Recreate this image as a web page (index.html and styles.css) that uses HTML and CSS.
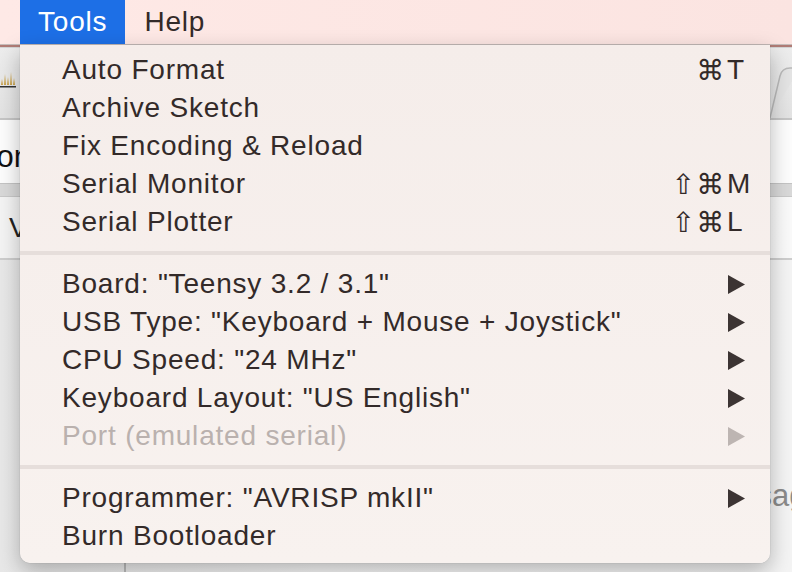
FILE: index.html
```html
<!DOCTYPE html>
<html>
<head>
<meta charset="utf-8">
<link rel="stylesheet" href="styles.css">
</head>
<body>
<div class="screen">
  <header class="menubar">
    <span class="mb-item active">Tools</span>
    <span class="mb-item">Help</span>
  </header>

  <div class="window">
    <div class="win-edge"></div>
    <div class="toolbar">
      <svg class="plot-icon" width="16" height="18" viewBox="0 0 16 18">
        <path d="M1 15 L2 9 L3 15 Z M4 15 L5 4 L6 15 Z M7 15 L8 7 L9 15 Z M10 15 L11 2 L12 15 Z M13 15 L14 8 L15 15 Z" fill="#c9a24a"/>
        <rect x="0" y="16" width="16" height="1.5" fill="#333"/>
      </svg>
      <svg class="tab-shape" width="30" height="52" viewBox="0 0 30 52">
        <path d="M0 52 L10 10 Q12 2 20 2 L30 2" fill="#e4e4e4" stroke="#b9b9b9" stroke-width="1.5"/>
      </svg>
    </div>
    <div class="tb-line"></div>
    <div class="editor-head"><span class="clip-text">com</span></div>
    <div class="grey-band"></div>
    <div class="light-band"><span class="v-text">V</span></div>
    <div class="band-line"></div>
    <div class="lower">
      <div class="lower-text">Usage</div>
      <div class="lower-foot"><span class="vline"></span></div>
    </div>
  </div>

  <div class="menu">
    <div class="item"><span class="label">Auto Format</span><span class="shortcut"><span class="mods">⌘</span><span class="key">T</span></span></div>
    <div class="item"><span class="label">Archive Sketch</span></div>
    <div class="item"><span class="label">Fix Encoding &amp; Reload</span></div>
    <div class="item"><span class="label">Serial Monitor</span><span class="shortcut"><span class="mods">⇧⌘</span><span class="key">M</span></span></div>
    <div class="item"><span class="label">Serial Plotter</span><span class="shortcut"><span class="mods">⇧⌘</span><span class="key">L</span></span></div>
    <div class="sep"></div>
    <div class="item"><span class="label">Board: "Teensy 3.2 / 3.1"</span><svg class="arrow" width="17" height="19" viewBox="0 0 17 19"><polygon points="0,0 17,9.5 0,19"/></svg></div>
    <div class="item"><span class="label">USB Type: "Keyboard + Mouse + Joystick"</span><svg class="arrow" width="17" height="19" viewBox="0 0 17 19"><polygon points="0,0 17,9.5 0,19"/></svg></div>
    <div class="item"><span class="label">CPU Speed: "24 MHz"</span><svg class="arrow" width="17" height="19" viewBox="0 0 17 19"><polygon points="0,0 17,9.5 0,19"/></svg></div>
    <div class="item"><span class="label">Keyboard Layout: "US English"</span><svg class="arrow" width="17" height="19" viewBox="0 0 17 19"><polygon points="0,0 17,9.5 0,19"/></svg></div>
    <div class="item disabled"><span class="label">Port (emulated serial)</span><svg class="arrow" width="17" height="19" viewBox="0 0 17 19"><polygon points="0,0 17,9.5 0,19"/></svg></div>
    <div class="sep"></div>
    <div class="item"><span class="label">Programmer: "AVRISP mkII"</span><svg class="arrow" width="17" height="19" viewBox="0 0 17 19"><polygon points="0,0 17,9.5 0,19"/></svg></div>
    <div class="item"><span class="label">Burn Bootloader</span></div>
  </div>
</div>
</body>
</html>
```

FILE: styles.css
```css
* { box-sizing: border-box; }
html, body { margin: 0; padding: 0; }
body {
  width: 792px;
  height: 572px;
  overflow: hidden;
  font-family: "Liberation Sans", Arial, "DejaVu Sans", sans-serif;
}
.screen {
  position: relative;
  width: 792px;
  height: 572px;
  overflow: hidden;
  background: #f2f2f2;
}

/* menu bar */
.menubar {
  height: 45px;
  display: flex;
  padding-left: 20px;
  background: linear-gradient(90deg, #fee9e6, #fbe4e1);
  border-bottom: 1px solid #c7bdbb;
}
.mb-item {
  font-size: 28px;
  letter-spacing: 0.8px;
  line-height: 44px;
  color: #332a29;
  padding: 0 18px 0 19px;
}
.mb-item.active {
  background: #1d6fe6;
  color: #ffffff;
  padding: 0 18px 0 18px;
}

/* window behind */
.window {
  height: 527px;
  display: flex;
  flex-direction: column;
}
.win-edge { height: 2px; background: #b07c76; flex: none; }
.toolbar {
  height: 71px;
  flex: none;
  background: linear-gradient(#ededed, #e3e3e3);
  display: flex;
  justify-content: space-between;
  align-items: flex-end;
  border-top: 1px solid #d4d4d4;
}
.plot-icon { margin-bottom: 30px; }
.tab-shape { margin-right: -8px; }
.tb-line { height: 2px; background: #c6c6c6; flex: none; }
.editor-head {
  height: 63px;
  flex: none;
  background: #fdfdfd;
  display: flex;
  align-items: center;
  padding-top: 10px;
}
.clip-text {
  font-size: 31px;
  color: #111;
  margin-left: -19px;
}
.grey-band {
  height: 14px;
  flex: none;
  background: #d9d9d9;
  border-top: 1px solid #c4c4c4;
  border-bottom: 1px solid #c9c9c9;
}
.light-band {
  height: 61px;
  flex: none;
  background: linear-gradient(90deg, #f4f4f4, #fafafa);
  display: flex;
  align-items: center;
  padding-left: 9px;
}
.v-text { font-size: 28px; color: #222; }
.band-line { height: 2px; background: #cecece; flex: none; }
.lower {
  flex: 1;
  background: linear-gradient(90deg, #e8e8e8, #f7f7f7 40%, #f4f4f4);
  display: flex;
  flex-direction: column;
}
.lower-text {
  margin-top: 218px;
  padding-left: 734px;
  font-size: 31px;
  color: #8b8b8b;
  white-space: nowrap;
}
.lower-foot { flex: 1; display: flex; align-items: flex-end; }
.vline {
  width: 2px;
  height: 20px;
  margin-left: 124px;
  background: #bdbdbd;
}

/* dropdown menu */
.menu {
  position: absolute;
  top: 45px;
  left: 20px;
  width: 750px;
  height: 518px;
  padding: 6px 0 8px;
  background: linear-gradient(#f5edea, #f8f2ef);
  border-radius: 0 0 10px 10px;
  box-shadow: 0 8px 22px rgba(0, 0, 0, 0.28), 0 0 1px rgba(0, 0, 0, 0.35);
}
.item {
  height: 38px;
  display: flex;
  align-items: center;
  padding-left: 42px;
  font-size: 28px;
  letter-spacing: 0.8px;
  color: #332a29;
}
.label { flex: 1; white-space: nowrap; }
.item.disabled { color: #bab1ae; }
.shortcut {
  display: flex;
  align-items: center;
  margin-right: 20px;
}
.mods {
  font-family: "DejaVu Sans", sans-serif;
  font-size: 28px;
  letter-spacing: 1.5px;
  text-align: right;
}
.key {
  width: 23px;
  margin-left: 1px;
  letter-spacing: 0;
}
.arrow {
  margin-right: 25px;
  fill: #3c3433;
  flex: none;
}
.item.disabled .arrow { fill: #bdb5b2; }
.sep {
  height: 4px;
  margin: 10px 0;
  background: #e6dedb;
}
```
